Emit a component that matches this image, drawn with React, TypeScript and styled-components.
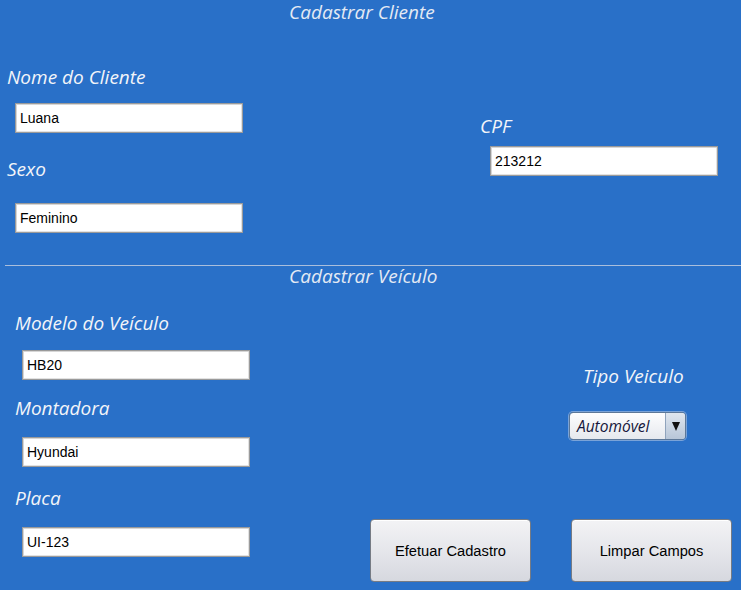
import React from "react";
import styled, { createGlobalStyle } from "styled-components";

const GlobalStyle = createGlobalStyle`
  html, body { margin: 0; padding: 0; background: #2970c8; }
  * { box-sizing: border-box; }
`;

const Page = styled.div`
  width: 741px;
  height: 590px;
  background: #2970c8;
  overflow: hidden;
  display: flex;
  flex-direction: column;
  font-family: "Open Sans", "Noto Sans", sans-serif;
`;

const Section = styled.section<{ $height?: number }>`
  display: flex;
  flex-direction: column;
  ${(p) => (p.$height ? `height: ${p.$height}px;` : "flex: 1;")}
`;

const SectionTitle = styled.h2<{ $top: number }>`
  margin: ${(p) => p.$top}px 0 0 289px;
  font-size: 19px;
  line-height: 18px;
  font-style: italic;
  font-weight: 400;
  color: #e4eaf4;
  white-space: nowrap;
`;

const Columns = styled.div`
  display: flex;
  flex: 1;
`;

const Column = styled.div<{ $width?: number }>`
  display: flex;
  flex-direction: column;
  align-items: flex-start;
  ${(p) => (p.$width ? `width: ${p.$width}px; flex: none;` : "flex: 1;")}
`;

const FieldLabel = styled.label<{ $top: number; $left: number }>`
  display: block;
  margin: ${(p) => p.$top}px 0 0 ${(p) => p.$left}px;
  font-size: 19px;
  line-height: 24px;
  font-style: italic;
  color: #f3f5f9;
  white-space: nowrap;
`;

const TextInput = styled.input<{ $top: number; $left: number }>`
  display: block;
  margin: ${(p) => p.$top}px 0 0 ${(p) => p.$left}px;
  width: 228px;
  height: 30px;
  padding: 0 0 0 4px;
  border: 1px solid #9a9a9a;
  box-shadow: inset 1px 1px 0 #d6d6d6, inset -1px -1px 0 #e2e2e2;
  background: #ffffff;
  font-family: "Liberation Sans", Arial, sans-serif;
  font-size: 14px;
  color: #000;
  outline: none;
`;

const Separator = styled.hr`
  margin: 0 0 0 5px;
  border: none;
  height: 1px;
  background: #a9bedc;
  flex: none;
`;

const Combo = styled.div<{ $top: number; $left: number }>`
  margin: ${(p) => p.$top}px 0 0 ${(p) => p.$left}px;
  width: 117px;
  height: 28px;
  display: flex;
  border: 1px solid #5d7898;
  border-radius: 4px;
  box-shadow: 0 0 0 1px #7aa3d8;
  overflow: hidden;
  background: linear-gradient(#fdfdfe, #e6e9ee);
`;

const ComboText = styled.span`
  flex: 1;
  display: flex;
  align-items: center;
  padding-left: 7px;
  font-size: 15.5px;
  font-style: italic;
  color: #15163a;
`;

const ComboArrow = styled.span`
  width: 20px;
  display: flex;
  align-items: center;
  justify-content: center;
  border-left: 1px solid #8fa3bc;
  background: linear-gradient(#dfe6ef, #b8c6d8);
`;

const ButtonRow = styled.div<{ $top: number }>`
  display: flex;
  gap: 40px;
  margin-top: ${(p) => p.$top}px;
`;

const ActionButton = styled.button`
  width: 161px;
  height: 63px;
  border: 1px solid #767b84;
  border-radius: 4px;
  background: linear-gradient(#f3f3f5, #e4e5ea 55%, #d6d8df);
  box-shadow: inset 0 1px 0 #ffffff;
  font-family: "Liberation Sans", Arial, sans-serif;
  font-size: 14.7px;
  color: #000;
  padding: 0;
  cursor: pointer;
`;

export default function App() {
  return (
    <Page>
      <GlobalStyle />
      <Section $height={265}>
        <SectionTitle $top={3}>Cadastrar Cliente</SectionTitle>
        <Columns>
          <Column $width={473}>
            <FieldLabel $top={44} $left={7}>Nome do Cliente</FieldLabel>
            <TextInput $top={14} $left={15} readOnly value="Luana" />
            <FieldLabel $top={24} $left={7}>Sexo</FieldLabel>
            <TextInput $top={22} $left={15} readOnly value="Feminino" />
          </Column>
          <Column>
            <FieldLabel $top={93} $left={7}>CPF</FieldLabel>
            <TextInput $top={8} $left={17} readOnly value="213212" />
          </Column>
        </Columns>
      </Section>
      <Separator />
      <Section>
        <SectionTitle $top={1}>Cadastrar Veículo</SectionTitle>
        <Columns>
          <Column $width={370}>
            <FieldLabel $top={26} $left={15}>Modelo do Veículo</FieldLabel>
            <TextInput $top={15} $left={22} readOnly value="HB20" />
            <FieldLabel $top={16} $left={15}>Montadora</FieldLabel>
            <TextInput $top={17} $left={22} readOnly value="Hyundai" />
            <FieldLabel $top={19} $left={15}>Placa</FieldLabel>
            <TextInput $top={17} $left={22} readOnly value="UI-123" />
          </Column>
          <Column>
            <FieldLabel $top={79} $left={213}>Tipo Veiculo</FieldLabel>
            <Combo $top={24} $left={199}>
              <ComboText>Automóvel</ComboText>
              <ComboArrow>
                <svg width="8" height="9" viewBox="0 0 8 9">
                  <path d="M0 0 H8 L4 9 Z" fill="#111" />
                </svg>
              </ComboArrow>
            </Combo>
            <ButtonRow $top={79}>
              <ActionButton>Efetuar Cadastro</ActionButton>
              <ActionButton>Limpar Campos</ActionButton>
            </ButtonRow>
          </Column>
        </Columns>
      </Section>
    </Page>
  );
}
